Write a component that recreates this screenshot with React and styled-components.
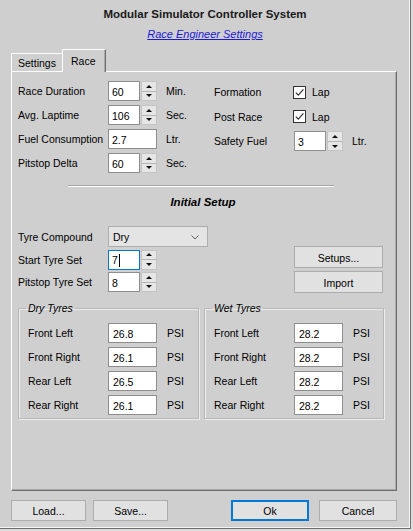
import React from "react";
import styled, { createGlobalStyle, css } from "styled-components";

const Global = createGlobalStyle`
  html, body {
    margin: 0;
    padding: 0;
    background: #dcdcdc;
  }
  * { box-sizing: border-box; }
  body {
    font-family: "Liberation Sans", Arial, sans-serif;
    font-size: 10.5px;
    color: #000;
  }
`;

const Frame = styled.div`
  width: 411px;
  height: 529px;
  background: #cfcfcf;
  border-right: 1px solid #6e6e6e;
  border-bottom: 1px solid #6e6e6e;
  box-shadow: inset -1px -1px 0 #f4f4f4;
  padding-top: 7px;
  display: flex;
  flex-direction: column;
`;

const Title = styled.div`
  font-weight: 700;
  font-size: 11.5px;
  line-height: 14px;
  text-align: center;
  color: #1a1a1a;
`;

const HeaderLink = styled.a`
  display: block;
  margin-top: 6px;
  font-size: 11px;
  line-height: 14px;
  font-style: italic;
  text-align: center;
  color: #1a1ad6;
  text-decoration: underline;
  cursor: pointer;
`;

const TabStrip = styled.div`
  margin-top: 8px;
  padding-left: 11px;
  height: 22px;
  display: flex;
  align-items: flex-end;
`;

const Tab = styled.div`
  display: flex;
  align-items: center;
  background: #cfcfcf;
  border-top: 1px solid #fff;
  border-left: 1px solid #fff;
  border-right: 1px solid #6e6e6e;
  box-shadow: inset -1px 0 0 #a8a8a8;
  ${({ $active }) =>
    $active
      ? css`
          height: 23px;
          padding: 0 10px 1px 8px;
          margin-bottom: -1px;
          position: relative;
          z-index: 1;
          border-top-left-radius: 2px;
        `
      : css`
          height: 18px;
          padding: 0 6px 0 6px;
          border-right: none;
          box-shadow: none;
        `}
`;

const TabPanel = styled.div`
  margin-left: 11px;
  width: 386px;
  height: 420px;
  border-top: 1px solid #fff;
  border-left: 1px solid #fff;
  border-right: 1px solid #6e6e6e;
  border-bottom: 1px solid #6e6e6e;
  box-shadow: inset -1px -1px 0 #a8a8a8;
  padding: 9px 8px 0 6px;
`;

const TopGrid = styled.div`
  display: grid;
  grid-template-columns: 196px 1fr;
  align-items: start;
`;

const FieldColumn = styled.div`
  display: flex;
  flex-direction: column;
  gap: ${({ $gap }) => $gap || 4}px;
  padding-top: ${({ $offset }) => $offset || 0}px;
`;

const Label = styled.span`
  white-space: nowrap;
  line-height: 12px;
`;

const Unit = styled.span`
  line-height: 12px;
`;

const FieldRow = styled.div`
  display: grid;
  grid-template-columns: ${({ $labelWidth }) => $labelWidth || 90}px auto 1fr;
  align-items: center;
  height: ${({ $h }) => $h || 20}px;
  & > ${Unit} {
    margin-left: ${({ $unitGap }) => $unitGap ?? 9}px;
  }
`;

const TextBox = styled.div`
  width: ${({ $width }) => $width}px;
  height: 20px;
  background: #fff;
  border: 1px solid ${({ $focused }) => ($focused ? "#0078d7" : "#8e8e8e")};
  padding: 1px 0 0 ${({ $pad }) => $pad ?? 3}px;
  display: flex;
  align-items: center;
  line-height: 12px;
`;

const Caret = styled.span`
  display: inline-block;
  width: 1px;
  height: 13px;
  background: #000;
  margin-left: 1px;
`;

const SpinBox = styled.div`
  display: flex;
  align-items: stretch;
  height: 20px;
`;

const Spinner = styled.div`
  width: 16px;
  margin-left: 1px;
  display: flex;
  flex-direction: column;
  border: 1px solid #c4c4c4;
  background: #e6e6e6;
`;

const SpinHalf = styled.div`
  flex: 1;
  display: flex;
  align-items: center;
  justify-content: center;
  & + & {
    border-top: 1px solid #b4b4b4;
  }
  &::after {
    content: "";
    width: 0;
    height: 0;
    border-left: 3px solid transparent;
    border-right: 3px solid transparent;
    ${({ $down }) =>
      $down
        ? "border-top: 3px solid #111;"
        : "border-bottom: 3px solid #111;"}
  }
`;

const CheckRow = styled.div`
  display: flex;
  align-items: center;
  gap: 6px;
`;

const CheckBox = styled.div`
  width: 13px;
  height: 13px;
  margin-left: -1px;
  border: 1px solid #333;
  background: #fff;
  display: flex;
  align-items: center;
  justify-content: center;
`;

const Separator = styled.div`
  margin: 12px 0 0 50px;
  width: 266px;
  border-top: 1px solid #a4a4a4;
  border-bottom: 1px solid #fff;
`;

const SectionTitle = styled.div`
  margin-top: 8px;
  font-weight: 700;
  font-style: italic;
  font-size: 11.5px;
  line-height: 14px;
  text-align: center;
`;

const SetupGrid = styled.div`
  margin-top: 17px;
  display: grid;
  grid-template-columns: 276px 89px;
  align-items: start;
`;

const ComboBox = styled.div`
  width: 100px;
  height: 21px;
  background: #e4e4e4;
  border: 1px solid #adadad;
  padding: 1px 8px 0 4px;
  display: flex;
  align-items: center;
  justify-content: space-between;
`;

const SideButtons = styled.div`
  display: flex;
  flex-direction: column;
  gap: 3px;
  padding-top: 20px;
`;

const Button = styled.div`
  width: ${({ $width }) => $width}px;
  height: ${({ $h }) => $h || 22}px;
  background: #e1e1e1;
  border: 1px solid ${({ $default }) => ($default ? "#0078d7" : "#adadad")};
  box-shadow: ${({ $default }) => ($default ? "inset 0 0 0 1px #0078d7" : "none")};
  display: flex;
  align-items: center;
  justify-content: center;
  padding-top: 1px;
`;

const GroupRow = styled.div`
  margin-top: 9px;
  display: grid;
  grid-template-columns: 181px 180px;
  column-gap: 5px;
`;

const GroupBox = styled.fieldset`
  margin: 0;
  min-width: 0;
  padding: 9px 0 3px 9px;
  border: 1px solid #b8b8b8;
  box-shadow: 1px 1px 0 #ececec, inset 1px 1px 0 #ececec;
`;

const Caption = styled.legend`
  padding: 0 2px;
  margin-left: -2px;
  font-style: italic;
  line-height: 12px;
`;

const Footer = styled.div`
  margin-top: 9px;
  padding: 0 13px 0 11px;
  display: flex;
  justify-content: space-between;
`;

const ButtonGroup = styled.div`
  display: flex;
  gap: ${({ $gap }) => $gap}px;
`;

function Spin({ value, focused }) {
  return (
    <SpinBox>
      <TextBox $width={32} $focused={focused}>
        {value}
        {focused && <Caret />}
      </TextBox>
      <Spinner>
        <SpinHalf />
        <SpinHalf $down />
      </Spinner>
    </SpinBox>
  );
}

function Check() {
  return (
    <CheckBox>
      <svg width="11" height="11" viewBox="0 0 11 11">
        <path d="M1.8 5.6 L4.3 8.2 L9.4 2.3" fill="none" stroke="#333" strokeWidth="1.2" />
      </svg>
    </CheckBox>
  );
}

const dry = [
  ["Front Left", "26.8"],
  ["Front Right", "26.1"],
  ["Rear Left", "26.5"],
  ["Rear Right", "26.1"],
];

const wet = [
  ["Front Left", "28.2"],
  ["Front Right", "28.2"],
  ["Rear Left", "28.2"],
  ["Rear Right", "28.2"],
];

function Tyres({ title, items }) {
  return (
    <GroupBox>
      <Caption>{title}</Caption>
      <FieldColumn>
        {items.map(([name, psi]) => (
          <FieldRow key={name} $labelWidth={80} $unitGap={10}>
            <Label>{name}</Label>
            <TextBox $width={49} $pad={4}>{psi}</TextBox>
            <Unit>PSI</Unit>
          </FieldRow>
        ))}
      </FieldColumn>
    </GroupBox>
  );
}

export default function App() {
  return (
    <>
      <Global />
      <Frame>
        <Title>Modular Simulator Controller System</Title>
        <HeaderLink>Race Engineer Settings</HeaderLink>

        <TabStrip>
          <Tab>Settings</Tab>
          <Tab $active>Race</Tab>
        </TabStrip>

        <TabPanel>
          <TopGrid>
            <FieldColumn>
              <FieldRow>
                <Label>Race Duration</Label>
                <Spin value="60" />
                <Unit>Min.</Unit>
              </FieldRow>
              <FieldRow>
                <Label>Avg. Laptime</Label>
                <Spin value="106" />
                <Unit>Sec.</Unit>
              </FieldRow>
              <FieldRow>
                <Label>Fuel Consumption</Label>
                <TextBox $width={49}>2.7</TextBox>
                <Unit>Ltr.</Unit>
              </FieldRow>
              <FieldRow>
                <Label>Pitstop Delta</Label>
                <Spin value="60" />
                <Unit>Sec.</Unit>
              </FieldRow>
            </FieldColumn>

            <FieldColumn $offset={1} $gap={4.7}>
              <FieldRow $labelWidth={80}>
                <Label>Formation</Label>
                <CheckRow>
                  <Check />
                  <span>Lap</span>
                </CheckRow>
              </FieldRow>
              <FieldRow $labelWidth={80}>
                <Label>Post Race</Label>
                <CheckRow>
                  <Check />
                  <span>Lap</span>
                </CheckRow>
              </FieldRow>
              <FieldRow $labelWidth={80}>
                <Label>Safety Fuel</Label>
                <Spin value="3" />
                <Unit>Ltr.</Unit>
              </FieldRow>
            </FieldColumn>
          </TopGrid>

          <Separator />
          <SectionTitle>Initial Setup</SectionTitle>

          <SetupGrid>
            <FieldColumn $gap={2.5}>
              <FieldRow $h={21}>
                <Label>Tyre Compound</Label>
                <ComboBox>
                  <span>Dry</span>
                  <svg width="8" height="5" viewBox="0 0 8 5">
                    <path d="M0.5 0.5 L4 4 L7.5 0.5" fill="none" stroke="#606060" strokeWidth="1" />
                  </svg>
                </ComboBox>
              </FieldRow>
              <FieldRow>
                <Label>Start Tyre Set</Label>
                <Spin value="7" focused />
              </FieldRow>
              <FieldRow>
                <Label>Pitstop Tyre Set</Label>
                <Spin value="8" />
              </FieldRow>
            </FieldColumn>
            <SideButtons>
              <Button $width={89}>Setups...</Button>
              <Button $width={89}>Import</Button>
            </SideButtons>
          </SetupGrid>

          <GroupRow>
            <Tyres title="Dry Tyres" items={dry} />
            <Tyres title="Wet Tyres" items={wet} />
          </GroupRow>
        </TabPanel>

        <Footer>
          <ButtonGroup $gap={7}>
            <Button $width={75} $h={21}>Load...</Button>
            <Button $width={75} $h={21}>Save...</Button>
          </ButtonGroup>
          <ButtonGroup $gap={10}>
            <Button $width={78} $h={21} $default>Ok</Button>
            <Button $width={78} $h={21}>Cancel</Button>
          </ButtonGroup>
        </Footer>
      </Frame>
    </>
  );
}
